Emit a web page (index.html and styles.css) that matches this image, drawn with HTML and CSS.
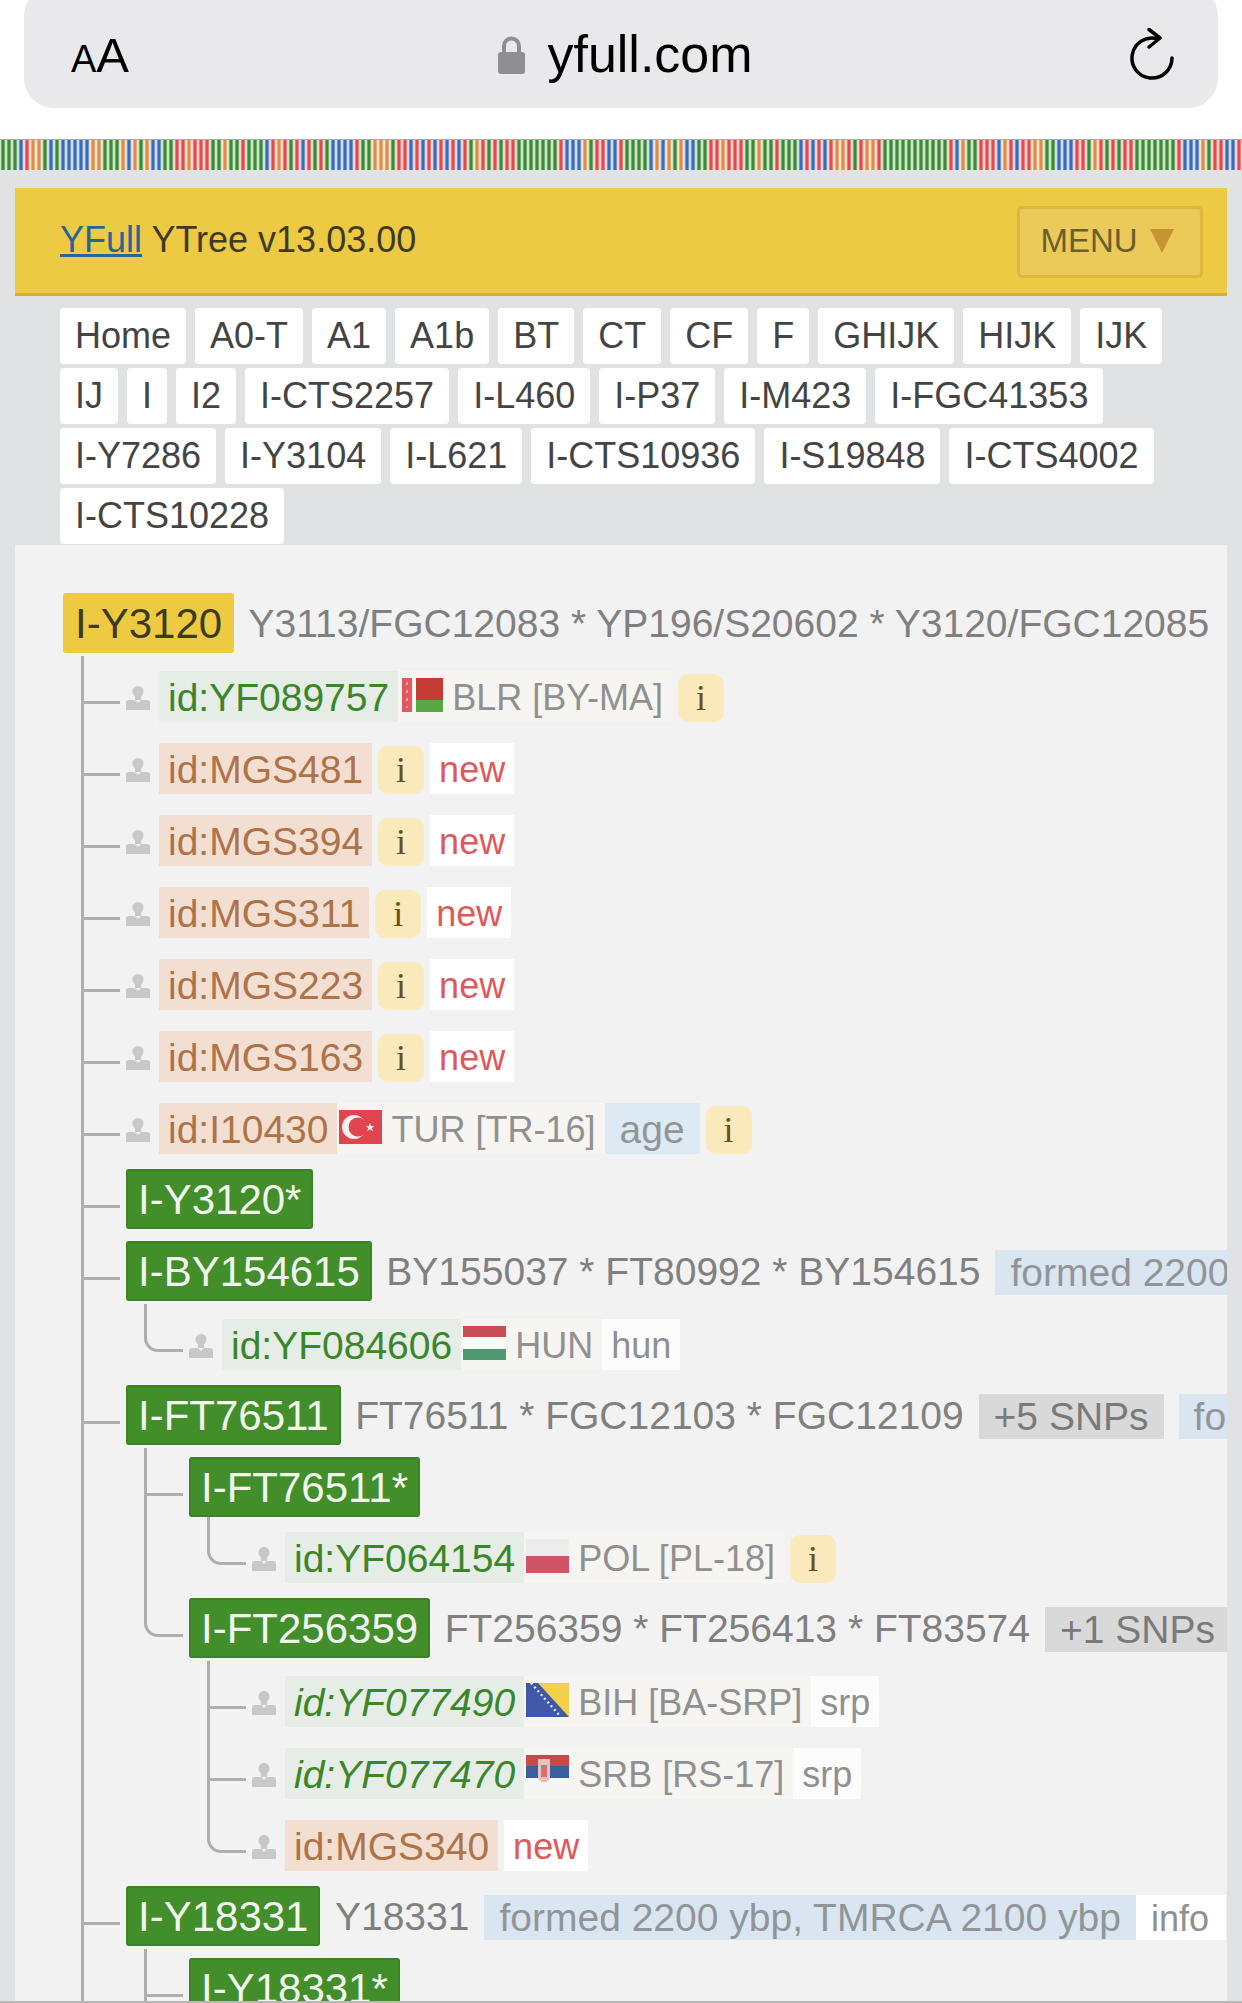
FILE: index.html
```html
<!DOCTYPE html>
<html lang="en">
<head>
    <meta charset="UTF-8">
    <title>YFull YTree</title>
    <link rel="stylesheet" href="styles.css">
</head>
<body>

    <div class="browser">
        <div class="urlbar">
            <div class="aa"><span class="aa-small">A</span>A</div>
            <div class="address">
                <svg class="lock" viewBox="0 0 27 39"><path d="M6 20V11a7.500 7.500 0 0 1 15 0v9" fill="none" stroke="#8e8e93" stroke-width="4"/><rect y="17" width="27" height="22" rx="3" fill="#8e8e93"/></svg>
                <span>yfull.com</span>
            </div>
            <svg class="reload" viewBox="0 0 44 52"><path d="M28 11A20 20 0 1 0 42 30" fill="none" stroke="#000" stroke-width="3.500" stroke-linecap="round"/><path d="M19 1.500L30 10L19 19" fill="none" stroke="#000" stroke-width="3.500" stroke-linecap="round" stroke-linejoin="round"/></svg>
        </div>
    </div>

    <div class="dna"><i class="g"></i><i class="g"></i><i class="g"></i><i class="b"></i><i class="r"></i><i class="a"></i><i class="a"></i><i class="g"></i><i class="b"></i><i class="g"></i><i class="b"></i><i class="b"></i><i class="b"></i><i class="b"></i><i class="b"></i><i class="a"></i><i class="a"></i><i class="g"></i><i class="g"></i><i class="g"></i><i class="a"></i><i class="b"></i><i class="a"></i><i class="g"></i><i class="a"></i><i class="b"></i><i class="b"></i><i class="g"></i><i class="g"></i><i class="r"></i><i class="r"></i><i class="a"></i><i class="r"></i><i class="r"></i><i class="r"></i><i class="g"></i><i class="g"></i><i class="a"></i><i class="g"></i><i class="g"></i><i class="r"></i><i class="g"></i><i class="g"></i><i class="g"></i><i class="b"></i><i class="r"></i><i class="a"></i><i class="r"></i><i class="g"></i><i class="r"></i><i class="b"></i><i class="r"></i><i class="g"></i><i class="r"></i><i class="g"></i><i class="b"></i><i class="b"></i><i class="b"></i><i class="b"></i><i class="r"></i><i class="g"></i><i class="g"></i><i class="a"></i><i class="a"></i><i class="a"></i><i class="g"></i><i class="r"></i><i class="r"></i><i class="b"></i><i class="r"></i><i class="b"></i><i class="r"></i><i class="b"></i><i class="r"></i><i class="b"></i><i class="r"></i><i class="b"></i><i class="r"></i><i class="g"></i><i class="a"></i><i class="r"></i><i class="g"></i><i class="r"></i><i class="g"></i><i class="r"></i><i class="r"></i><i class="g"></i><i class="g"></i><i class="g"></i><i class="g"></i><i class="g"></i><i class="g"></i><i class="g"></i><i class="r"></i><i class="b"></i><i class="b"></i><i class="b"></i><i class="a"></i><i class="g"></i><i class="r"></i><i class="r"></i><i class="b"></i><i class="b"></i><i class="r"></i><i class="g"></i><i class="g"></i><i class="g"></i><i class="g"></i><i class="b"></i><i class="a"></i><i class="b"></i><i class="a"></i><i class="g"></i><i class="a"></i><i class="b"></i><i class="b"></i><i class="g"></i><i class="g"></i><i class="r"></i><i class="r"></i><i class="a"></i><i class="r"></i><i class="r"></i><i class="r"></i><i class="g"></i><i class="g"></i><i class="a"></i><i class="g"></i><i class="g"></i><i class="r"></i><i class="g"></i><i class="g"></i><i class="g"></i><i class="b"></i><i class="r"></i><i class="b"></i><i class="r"></i><i class="b"></i><i class="r"></i><i class="a"></i><i class="a"></i><i class="r"></i><i class="g"></i><i class="r"></i><i class="a"></i><i class="a"></i><i class="r"></i><i class="g"></i><i class="g"></i><i class="g"></i><i class="g"></i><i class="g"></i><i class="g"></i><i class="g"></i><i class="g"></i><i class="g"></i><i class="g"></i><i class="g"></i><i class="r"></i><i class="b"></i><i class="a"></i><i class="g"></i><i class="g"></i><i class="r"></i><i class="r"></i><i class="r"></i><i class="b"></i><i class="a"></i><i class="r"></i><i class="b"></i><i class="r"></i><i class="r"></i><i class="a"></i><i class="a"></i><i class="g"></i><i class="g"></i><i class="b"></i><i class="b"></i><i class="b"></i><i class="r"></i><i class="r"></i><i class="g"></i><i class="a"></i><i class="r"></i><i class="g"></i><i class="r"></i><i class="g"></i><i class="r"></i><i class="r"></i><i class="g"></i><i class="g"></i><i class="g"></i><i class="g"></i><i class="g"></i><i class="g"></i><i class="g"></i><i class="r"></i><i class="b"></i><i class="b"></i><i class="b"></i><i class="a"></i><i class="g"></i><i class="r"></i><i class="r"></i><i class="b"></i><i class="b"></i><i class="r"></i><i class="g"></i></div>

    <div class="topbar">
        <div class="title"><a href="#">YFull</a> YTree v13.03.00</div>
        <div class="menu-button">MENU <span class="menu-arrow"></span></div>
    </div>

    <div class="tabs">
        <a href="#">Home</a><a href="#">A0-T</a><a href="#">A1</a><a href="#">A1b</a><a href="#">BT</a><a href="#">CT</a><a href="#">CF</a><a href="#">F</a><a href="#">GHIJK</a><a href="#">HIJK</a><a href="#">IJK</a>
        <a href="#">IJ</a><a href="#">I</a><a href="#">I2</a><a href="#">I-CTS2257</a><a href="#">I-L460</a><a href="#">I-P37</a><a href="#">I-M423</a><a href="#">I-FGC41353</a>
        <a href="#">I-Y7286</a><a href="#">I-Y3104</a><a href="#">I-L621</a><a href="#">I-CTS10936</a><a href="#">I-S19848</a><a href="#">I-CTS4002</a>
        <a href="#">I-CTS10228</a>
    </div>

    <svg class="sprites" width="0" height="0">
        <symbol id="person" viewBox="0 0 24 24">
            <circle cx="12" cy="5.500" r="5.500"/>
            <path d="M9 9h6v5H9zM0 24v-7q0-3 3-3h6l3 3 3-3h6q3 0 3 3v7z"/>
        </symbol>
    </svg>

    <div class="tree">
        <ul class="root">
            <li>
                <div class="node"><span class="label gold">I-Y3120</span><span class="snps">Y3113/FGC12083 * YP196/S20602 * Y3120/FGC12085</span></div>
                <ul class="branch">
                    <li><div class="kit">
                        <svg class="person"><use href="#person"/></svg>
                        <span class="id ok">id:YF089757</span>
                        <span class="geo"><svg class="flag" viewBox="0 0 43 34"><rect x="2" width="10" height="34" fill="#e2575f"/><path d="M7 4v26" stroke="#f0a5a8" stroke-width="2" stroke-dasharray="3 5"/><rect x="16" width="27" height="22" fill="#c43d35"/><rect x="16" y="22" width="27" height="12" fill="#57a843"/></svg>BLR [BY-MA]</span>
                        <span class="info">i</span>
                    </div></li>
                    <li><div class="kit">
                        <svg class="person"><use href="#person"/></svg>
                        <span class="id own">id:MGS481</span><span class="info">i</span><span class="new">new</span>
                    </div></li>
                    <li><div class="kit">
                        <svg class="person"><use href="#person"/></svg>
                        <span class="id own">id:MGS394</span><span class="info">i</span><span class="new">new</span>
                    </div></li>
                    <li><div class="kit">
                        <svg class="person"><use href="#person"/></svg>
                        <span class="id own">id:MGS311</span><span class="info">i</span><span class="new">new</span>
                    </div></li>
                    <li><div class="kit">
                        <svg class="person"><use href="#person"/></svg>
                        <span class="id own">id:MGS223</span><span class="info">i</span><span class="new">new</span>
                    </div></li>
                    <li><div class="kit">
                        <svg class="person"><use href="#person"/></svg>
                        <span class="id own">id:MGS163</span><span class="info">i</span><span class="new">new</span>
                    </div></li>
                    <li><div class="kit">
                        <svg class="person"><use href="#person"/></svg>
                        <span class="id own">id:I10430</span>
                        <span class="geo"><svg class="flag" viewBox="0 0 43 34"><rect width="43" height="34" fill="#e0454f"/><circle cx="15" cy="17" r="12" fill="#fbeeee"/><circle cx="19" cy="17" r="9.500" fill="#e0454f"/><path d="M31 13l1.200 3 3.300 0-2.600 2 1 3.200-2.900-1.900-2.700 1.900 1-3.200-2.600-2 3.200 0z" fill="#fbeeee"/></svg>TUR [TR-16]</span>
                        <span class="age">age</span><span class="info">i</span>
                    </div></li>
                    <li><div class="node"><span class="label">I-Y3120*</span></div></li>
                    <li>
                        <div class="node"><span class="label">I-BY154615</span><span class="snps">BY155037 * FT80992 * BY154615</span><span class="age">formed 2200 ybp, TMRCA 2200 ybp</span></div>
                        <ul class="branch">
                            <li class="end"><div class="kit">
                                <svg class="person"><use href="#person"/></svg>
                                <span class="id ok">id:YF084606</span>
                                <span class="geo"><svg class="flag" viewBox="0 0 43 34"><rect width="43" height="11" fill="#c84e56"/><rect y="11" width="43" height="12" fill="#fafafa"/><rect y="23" width="43" height="11" fill="#4f9a70"/></svg>HUN</span>
                                <span class="lang">hun</span>
                            </div></li>
                        </ul>
                    </li>
                    <li>
                        <div class="node"><span class="label">I-FT76511</span><span class="snps">FT76511 * FGC12103 * FGC12109</span><span class="more">+5 SNPs</span><span class="age">formed 2100 ybp</span></div>
                        <ul class="branch">
                            <li>
                                <div class="node"><span class="label">I-FT76511*</span></div>
                                <ul class="branch tight">
                                    <li class="end"><div class="kit">
                                        <svg class="person"><use href="#person"/></svg>
                                        <span class="id ok">id:YF064154</span>
                                        <span class="geo"><svg class="flag" viewBox="0 0 43 34"><rect width="43" height="17" fill="#ececec"/><rect y="17" width="43" height="17" fill="#cd5566"/></svg>POL [PL-18]</span>
                                        <span class="info">i</span>
                                    </div></li>
                                </ul>
                            </li>
                            <li class="end">
                                <div class="node"><span class="label">I-FT256359</span><span class="snps">FT256359 * FT256413 * FT83574</span><span class="more">+1 SNPs</span></div>
                                <ul class="branch">
                                    <li><div class="kit">
                                        <svg class="person"><use href="#person"/></svg>
                                        <span class="id ok slanted">id:YF077490</span>
                                        <span class="geo"><svg class="flag" viewBox="0 0 43 34"><rect width="43" height="34" fill="#3f58a8"/><path d="M12 0h31v34z" fill="#f4cf4a"/><path d="M5 0l29 33" stroke="#e6e9f5" stroke-width="2.500" stroke-dasharray="2 3"/></svg>BIH [BA-SRP]</span>
                                        <span class="lang">srp</span>
                                    </div></li>
                                    <li><div class="kit">
                                        <svg class="person"><use href="#person"/></svg>
                                        <span class="id ok slanted">id:YF077470</span>
                                        <span class="geo"><svg class="flag" viewBox="0 0 43 34"><rect width="43" height="11" fill="#c8484e"/><rect y="11" width="43" height="12" fill="#3d5f9e"/><rect y="23" width="43" height="11" fill="#f5f5f5"/><path d="M12 4h12v20q-6 7-12 0z" fill="#e9c3bd"/><rect x="15" y="10" width="6" height="12" fill="#d9706c"/></svg>SRB [RS-17]</span>
                                        <span class="lang">srp</span>
                                    </div></li>
                                    <li class="end"><div class="kit">
                                        <svg class="person"><use href="#person"/></svg>
                                        <span class="id own">id:MGS340</span><span class="new">new</span>
                                    </div></li>
                                </ul>
                            </li>
                        </ul>
                    </li>
                    <li>
                        <div class="node"><span class="label">I-Y18331</span><span class="snps">Y18331</span><span class="age">formed 2200 ybp, TMRCA 2100 ybp</span><span class="lang tall">info</span></div>
                        <ul class="branch">
                            <li><div class="node"><span class="label">I-Y18331*</span></div></li>
                        </ul>
                    </li>
                </ul>
            </li>
        </ul>
    </div>

    <div class="page-end"></div>

</body>
</html>
```

FILE: styles.css
```css
html,
body {
    height: 2003px;
    overflow: hidden;
}

body {
    margin: 0;
    font-family: "Liberation Sans", Arial, sans-serif;
    background-color: #e1e2e4;
    color: #444;
}

/* Safari address bar */
.browser {
    height: 139px;
    padding: 0 24px;
    box-sizing: border-box;
    background-color: #fff;
    overflow: hidden;
}

.urlbar {
    display: flex;
    justify-content: space-between;
    align-items: center;
    height: 122px;
    margin-top: -14px;
    padding: 14px 44px 0 47px;
    box-sizing: border-box;
    background-color: #e9e9eb;
    border-radius: 30px;
    color: #000;
}

.aa {
    margin-top: 6px;
    font-size: 49px;
    line-height: 60px;
}

.aa-small {
    font-size: 38px;
}

.address {
    display: flex;
    align-items: center;
    margin-right: 8px;
    font-size: 52px;
    line-height: 60px;
}

.lock {
    width: 27px;
    height: 39px;
    margin-right: 22px;
}

.reload {
    width: 44px;
    height: 52px;
}

/* Coloured bar under the address bar */
.dna {
    display: flex;
    height: 30px;
    border-top: 1px solid #aaa;
    overflow: hidden;
    margin-bottom: 18px;
    background-color: #fff;
}

.dna i {
    flex: 0 0 6px;
}

.dna .g { background: linear-gradient(90deg, #fff, #3a8c32 35%, #3a8c32 65%, #fff); }
.dna .b { background: linear-gradient(90deg, #fff, #3a6db5 35%, #3a6db5 65%, #fff); }
.dna .r { background: linear-gradient(90deg, #fff, #e34b4b 35%, #e34b4b 65%, #fff); }
.dna .a { background: linear-gradient(90deg, #fff, #e08c44 35%, #e08c44 65%, #fff); }

/* Yellow title bar */
.topbar {
    display: flex;
    justify-content: space-between;
    align-items: center;
    height: 108px;
    margin: 0 15px;
    padding: 0 24px 0 45px;
    box-sizing: border-box;
    background-color: #edca44;
    border-bottom: 3px solid #d9ab38;
    color: #3f3a20;
}

.title {
    padding-bottom: 2px;
    font-size: 36px;
}

.title a {
    color: #2d6497;
}

.menu-button {
    display: flex;
    align-items: center;
    justify-content: center;
    gap: 12px;
    width: 186px;
    height: 72px;
    box-sizing: border-box;
    margin-top: 3px;
    padding: 0 6px 2px 0;
    background-color: #ebca5a;
    border: 3px solid #e0b53c;
    border-radius: 5px;
    font-size: 33px;
    color: #6b5f2e;
}

.menu-arrow {
    border-left: 12px solid transparent;
    border-right: 12px solid transparent;
    border-top: 24px solid #c69430;
}

/* Haplogroup path */
.tabs {
    display: flex;
    flex-wrap: wrap;
    gap: 4px 9px;
    width: 1160px;
    padding: 12px 0 1px 60px;
    box-sizing: content-box;
}

.tabs a {
    height: 56px;
    padding: 0 15px;
    background-color: #fff;
    border-radius: 4px;
    font-size: 36px;
    line-height: 56px;
    color: #444;
    text-decoration: none;
}

.sprites {
    display: block;
    height: 0;
}

/* Tree */
.tree {
    margin: 0 15px;
    padding: 48px 0 0 48px;
    background-color: #f2f2f2;
    overflow: hidden;
}

.tree ul {
    margin: 0;
    list-style: none;
}

.root {
    padding: 0;
}

.branch {
    padding: 0 0 0 63px;
}

.tree .branch.tight {
    margin-top: -3px;
}

.branch > li {
    position: relative;
}

/* Elbow from the parent line to the row */
.branch > li::before {
    content: "";
    position: absolute;
    top: -9px;
    left: -45px;
    width: 36px;
    height: 45px;
    border-left: 3px solid #aeaeae;
    border-bottom: 3px solid #aeaeae;
}

/* Line running on to the next sibling */
.branch > li::after {
    content: "";
    position: absolute;
    top: 0;
    bottom: 0;
    left: -45px;
    width: 3px;
    background-color: #aeaeae;
}

.branch > li.end::before {
    border-bottom-left-radius: 14px;
}

.branch > li.end::after {
    display: none;
}

.node,
.kit {
    display: flex;
    align-items: flex-start;
    white-space: nowrap;
    height: 72px;
    box-sizing: border-box;
}

.kit {
    padding-top: 6px;
}

.label {
    flex: none;
    height: 60px;
    padding: 0 10px;
    box-sizing: border-box;
    background-color: #418e2a;
    border: 2px solid #3a8327;
    border-radius: 3px;
    font-size: 42px;
    line-height: 58px;
    color: #f2f7ee;
}

.label.gold {
    background-color: #eeca42;
    border-color: #eeca42;
    color: #3d3a22;
}

.snps {
    flex: none;
    margin-left: 14.500px;
    font-size: 39px;
    line-height: 62px;
    color: #808080;
}

.more,
.age {
    flex: none;
    height: 45px;
    padding: 0 15px;
    margin-top: 9px;
    margin-left: 15px;
    font-size: 39px;
    line-height: 45px;
}

.more {
    background-color: #d9d9d9;
    color: #7a7a7a;
}

.age {
    background-color: #d9e6f1;
    color: #929598;
}

.kit .age {
    height: 51px;
    margin: 0;
    line-height: 53px;
    background-color: #deeaf3;
}

.person {
    flex: none;
    width: 24px;
    height: 24px;
    margin: 15px 9px 0 0;
    fill: #c8c8c8;
}

.id {
    flex: none;
    height: 51px;
    padding: 0 9px;
    font-size: 39px;
    line-height: 53px;
}

.id.ok {
    background-color: #e6ece6;
    color: #3a8729;
}

.id.own {
    background-color: #f2dfd2;
    color: #ae7349;
}

.id.slanted {
    font-style: italic;
}

.geo {
    display: flex;
    flex: none;
    height: 51px;
    padding: 0 9px 0 2px;
    background-color: #f6f5f1;
    font-size: 36px;
    line-height: 53px;
    color: #909090;
}

.flag {
    flex: none;
    width: 43px;
    height: 34px;
    margin: 7px 9px 0 0;
}

.info {
    flex: none;
    width: 46px;
    height: 48px;
    margin: 3px 0 0 6px;
    background-color: #fae9bb;
    border-radius: 10px;
    font-family: "Liberation Serif", serif;
    font-size: 36px;
    line-height: 48px;
    text-align: center;
    color: #6b4e1e;
}

.new,
.lang {
    flex: none;
    height: 51px;
    padding: 0 9px;
    background-color: #fff;
    font-size: 36px;
    line-height: 53px;
}

.new {
    margin-left: 6px;
    color: #e0585a;
}

.lang {
    color: #909090;
    background-color: #fcfcfc;
}

.lang.tall {
    height: 45px;
    margin-top: 9px;
    padding: 0 17px 0 15px;
    line-height: 47px;
    background-color: #fff;
}

.page-end {
    position: fixed;
    left: 0;
    right: 0;
    bottom: 0;
    height: 2px;
    background-color: #b8b8b8;
}
```
